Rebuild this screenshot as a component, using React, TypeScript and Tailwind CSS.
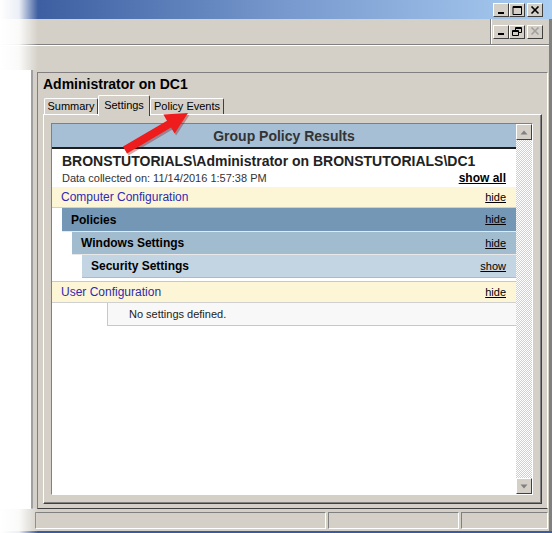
import React from "react";

const raised =
  "border border-t-white border-l-white border-r-[#404040] border-b-[#404040] bg-[#d4d0c8]";
const sunken =
  "border border-t-[#808080] border-l-[#808080] border-r-white border-b-white";

// small caption buttons (title bar + mdi child)
const CapBtn = ({ kind, off }: { kind: "min" | "max" | "restore" | "close"; off?: boolean }) => {
  const c = off ? "#a0a0a0" : "#000";
  return (
    <div className={`w-[16px] h-[14px] flex items-center justify-center ${raised}`}>
      <svg width="10" height="9" viewBox="0 0 10 9">
        {kind === "min" && <rect x="2" y="6" width="6" height="2" fill={c} />}
        {kind === "max" && (
          <path d="M1 0.5h8.5v8h-8.5z M1 1.5h8.5" stroke={c} strokeWidth="1" fill="none" />
        )}
        {kind === "restore" && (
          <g stroke={c} fill="none" strokeWidth="1">
            <path d="M3.5 0.5h6v5h-6z M3.5 1.5h6" />
            <path d="M0.5 3.5h6v5h-6z M0.5 4.5h6" fill="#d4d0c8" />
          </g>
        )}
        {kind === "close" && (
          <path d="M1.5 0.5l7 7 M8.5 0.5l-7 7" stroke={c} strokeWidth="1.6" />
        )}
      </svg>
    </div>
  );
};

const ScrollBtn = ({ up }: { up?: boolean }) => (
  <div className={`w-[16px] h-[16px] flex items-center justify-center ${raised}`}>
    <svg width="8" height="5" viewBox="0 0 8 5">
      <path d={up ? "M0.5 4.5L4 0.5L7.5 4.5z" : "M0.5 0.5L4 4.5L7.5 0.5z"} fill="#808080" />
    </svg>
  </div>
);

const Row = ({
  label,
  action,
  tone,
  indent = 0,
}: {
  label: string;
  action: string;
  tone: "config" | "l1" | "l2" | "l3";
  indent?: number;
}) => {
  const styles = {
    config: "bg-[#fdf6d6] text-[#2e2ab4] text-[12px] border-b border-[#d0d0d0] h-[21px]",
    l1: "bg-[#7497b6] text-black font-bold text-[12px] border-b border-[#e8e8e8] h-[24px]",
    l2: "bg-[#a1bbcf] text-black font-bold text-[12px] border-b border-[#e8e8e8] h-[23px]",
    l3: "bg-[#c3d4e2] text-black font-bold text-[12px] border-b border-[#b8b8b8] h-[23px]",
  }[tone];
  return (
    <div className={`flex items-center justify-between pl-[9px] pr-[10px] ${styles}`} style={{ marginLeft: indent }}>
      <span>{label}</span>
      <span className="underline text-black text-[11px] font-normal">{action}</span>
    </div>
  );
};

export default function App() {
  return (
    <div className="relative w-[552px] h-[533px] overflow-hidden bg-[#d4d0c8] flex flex-col font-['Liberation_Sans',Arial,sans-serif] text-black">
      {/* title bar */}
      <div className="h-[19px] shrink-0 bg-linear-to-r from-[#35569a] via-[#7597cc] to-[#aacdf2] flex items-center justify-end pr-[9px] pt-[1px]">
        <CapBtn kind="min" />
        <CapBtn kind="max" />
        <div className="w-[2px]" />
        <CapBtn kind="close" />
      </div>

      <div className="flex-1 flex flex-col border-r-[3px] border-[#808080]">
        {/* mdi child caption row */}
        <div className="h-[26px] shrink-0 flex items-center justify-end border-b border-[#808080] shadow-[0_1px_0_#fff]">
          <div className="h-full flex items-center pl-[2px] pr-[6px] border-l border-[#808080] shadow-[inset_1px_0_0_#fff]">
            <CapBtn kind="min" />
            <CapBtn kind="restore" />
            <div className="w-[2px]" />
            <CapBtn kind="close" off />
          </div>
        </div>

        {/* toolbar row (empty) */}
        <div className="h-[25px] shrink-0" />

        {/* panes */}
        <div className="flex-1 flex pb-[1px]">
          <div className="w-[33px] bg-white border-r-2 border-[#a0a0a0]" />
          <div className="ml-[4px] mr-[1px] mt-[2px] flex-1 flex flex-col border border-t-[#808080] border-l-[#808080] border-r-white border-b-[#404040] px-[5px] pb-[4px]">
            <div className="pt-[3px] pl-[-1px] h-[22px] text-[14px] font-bold leading-[16px]">Administrator on DC1</div>

            {/* tabs */}
            <div className="flex items-end h-[19px] pl-[1px] text-[11px]">
              <div className="h-[16px] w-[54px] text-center border border-b-0 border-t-white border-l-white border-r-[#404040] rounded-t-[2px] leading-[15px]">
                Summary
              </div>
              <div className="relative z-10 -mb-[2px] h-[21px] w-[52px] text-center bg-[#d4d0c8] border border-b-0 border-t-white border-l-white border-r-[#404040] rounded-t-[2px] leading-[18px]">
                Settings
              </div>
              <div className="h-[16px] w-[74px] text-center border border-b-0 border-t-white border-l-white border-r-[#404040] rounded-t-[2px] leading-[15px]">
                Policy Events
              </div>
            </div>

            {/* tab page */}
            <div className="flex-1 flex border border-t-white border-l-white border-r-[#404040] border-b-[#404040] shadow-[inset_-1px_-1px_0_#808080] pl-[7px] pr-[8px] pt-[8px] pb-[8px]">
              <div className={`flex-1 flex bg-white ${sunken}`}>
                <div className="flex-1 flex flex-col">
                  <div className="h-[25px] bg-[#a6bfd4] border-b-2 border-[#1e1e1e] text-center text-[14px] font-bold text-[#333] leading-[24px]">
                    Group Policy Results
                  </div>
                  <div className="h-[38px] pl-[10px] pr-[10px]">
                    <div className="pt-[4px] text-[14px] font-bold text-[#222] leading-[16px]">
                      BRONSTUTORIALS\Administrator on BRONSTUTORIALS\DC1
                    </div>
                    <div className="flex justify-between items-end mt-[3px]">
                      <span className="text-[11px] text-[#333] leading-[13px]">Data collected on: 11/14/2016 1:57:38 PM</span>
                      <span className="text-[12px] font-bold underline leading-[13px]">show all</span>
                    </div>
                  </div>
                  <Row label="Computer Configuration" action="hide" tone="config" />
                  <Row label="Policies" action="hide" tone="l1" indent={10} />
                  <Row label="Windows Settings" action="hide" tone="l2" indent={20} />
                  <Row label="Security Settings" action="show" tone="l3" indent={30} />
                  <div className="h-[3px]" />
                  <div className="border-t border-[#c8c8c8]">
                    <Row label="User Configuration" action="hide" tone="config" />
                  </div>
                  <div className="ml-[55px] h-[23px] bg-[#f8f8f8] border-l border-b border-[#c8c8c8] text-[11px] text-[#222] flex items-center pl-[21px]">
                    No settings defined.
                  </div>
                </div>
                {/* scrollbar */}
                <div className="w-[16px] flex flex-col justify-between bg-[repeating-conic-gradient(#d4d0c8_0_25%,#ffffff_0_50%)] bg-[length:2px_2px]">
                  <ScrollBtn up />
                  <ScrollBtn />
                </div>
              </div>
            </div>
          </div>
        </div>

        {/* status bar */}
        <div className="h-[21px] shrink-0 flex gap-[2px] pl-[35px] pr-[1px] pt-[2px] pb-[2px]">
          <div className={`w-[291px] ${sunken}`} />
          <div className={`w-[131px] ${sunken}`} />
          <div className={`flex-1 ${sunken}`} />
        </div>
      </div>
      <div className="h-[2px] shrink-0 bg-[#3b5c9c]" />

      {/* torn left edge fade */}
      <div className="absolute left-0 top-0 w-[38px] h-[70px] bg-linear-to-r from-white via-white/90 to-transparent pointer-events-none" />
      <div className="absolute left-0 bottom-0 w-[38px] h-[25px] bg-linear-to-r from-white via-white/90 to-transparent pointer-events-none" />

      {/* red callout arrow */}
      <svg className="absolute inset-0 pointer-events-none" width="552" height="533" viewBox="0 0 552 533">
        <polygon
          points="123,146.6 167,120.7 163.4,114.6 188,113 174.6,133.6 171,127.5 127,153.4"
          fill="#8a0c0c"
          opacity="0.35"
          transform="translate(1.5,2)"
        />
        <polygon points="123,146.6 167,120.7 163.4,114.6 188,113 174.6,133.6 171,127.5 127,153.4" fill="#ee1c1c" />
      </svg>
    </div>
  );
}
